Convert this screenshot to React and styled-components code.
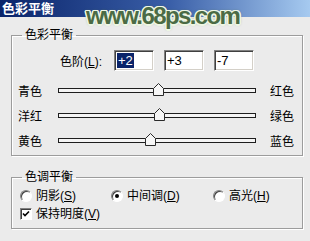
import React from "react";
import styled, { createGlobalStyle } from "styled-components";

const GlobalStyle = createGlobalStyle`
  html, body {
    margin: 0;
    padding: 0;
    background: #ebebeb;
  }
  body {
    font-family: "Liberation Sans", "Noto Sans CJK SC", sans-serif;
    font-size: 12px;
    color: #000;
    text-autospace: no-autospace;
  }
`;

const Dialog = styled.div`
  position: relative;
  width: 310px;
  height: 241px;
  background: #ebebeb;
  overflow: hidden;
`;

const TitleBar = styled.div`
  height: 17px;
  padding-left: 2px;
  display: flex;
  align-items: center;
  background: linear-gradient(to right, #0a246a 0%, #3a5fa8 55%, #a6caf0 100%);
  color: #fff;
  font-weight: bold;
  font-size: 13px;
  line-height: 17px;
`;

const Watermark = styled.div`
  position: absolute;
  left: 86px;
  top: 2px;
  font-family: "Liberation Sans", Arial, sans-serif;
  font-weight: bold;
  font-size: 24px;
  letter-spacing: -1.6px;
  color: #4b6b45;
  text-shadow:
    1.5px 0 0 #eef6e4, -1.5px 0 0 #eef6e4, 0 1.5px 0 #eef6e4, 0 -1.5px 0 #eef6e4,
    1px 1px 0 #eef6e4, -1px -1px 0 #eef6e4, 1px -1px 0 #eef6e4, -1px 1px 0 #eef6e4,
    0 0 3px #556f4c;
  pointer-events: none;
`;

const Group = styled.fieldset`
  margin: ${(p) => p.$top}px 7px 0 11px;
  padding: ${(p) => p.$padTop}px 0 0 0;
  min-width: 0;
  height: ${(p) => p.$height}px;
  box-sizing: border-box;
  border: 1px solid #9c9c9c;
  box-shadow: 1px 1px 0 #fff, inset 1px 1px 0 #fff;
`;

const Legend = styled.legend`
  margin-left: 10px;
  padding: 0 3px;
  line-height: 14px;
  font-size: 12px;
`;

const LevelsRow = styled.div`
  display: flex;
  align-items: center;
  gap: 10px;
  padding-left: 48px;
  height: 21px;
`;

const LevelsLabel = styled.span`
  margin-right: -2px;
  width: 46px;
`;

const NumBox = styled.div`
  width: 40px;
  height: 21px;
  box-sizing: border-box;
  background: #fff;
  border-top: 1px solid #808080;
  border-left: 1px solid #808080;
  border-bottom: 1px solid #fff;
  border-right: 1px solid #fff;
  box-shadow: inset 1px 1px 0 #404040, inset -1px -1px 0 #d4d0c8;
  padding: 2px 0 0 2px;
  font-family: "Liberation Sans", Arial, sans-serif;
  font-size: 13px;
  line-height: 15px;
`;

const Selected = styled.span`
  background: #0a246a;
  color: #fff;
  padding: 0 1px;
`;

const SliderRow = styled.div`
  display: grid;
  grid-template-columns: 40px 198px auto;
  align-items: center;
  height: 25px;
  padding-left: 6px;
`;

const SideLabel = styled.span`
  line-height: 14px;
  margin-left: ${(p) => p.$offset || 0}px;
`;

const TrackArea = styled.div`
  position: relative;
  height: 25px;
`;

const Track = styled.div`
  position: absolute;
  left: 0;
  right: 0;
  top: 9px;
  height: 5px;
  box-sizing: border-box;
  border: 1px solid #1e1e1e;
  background: #f4f4f4;
`;

const Thumb = styled.svg`
  position: absolute;
  top: 4px;
  width: 11px;
  height: 13px;
  overflow: visible;
`;

const Underline = styled.span`
  text-decoration: underline;
`;

const OptionRow = styled.div`
  display: grid;
  grid-template-columns: 91px 102px auto;
  align-items: center;
  height: 16px;
  padding-left: 8px;
  margin-top: ${(p) => p.$mt || 0}px;
`;

const Option = styled.label`
  display: flex;
  align-items: center;
  gap: 4px;
  line-height: 14px;
`;

const Radio = styled.span`
  position: relative;
  width: 12px;
  height: 12px;
  box-sizing: border-box;
  border-radius: 50%;
  border: 1px solid;
  border-color: #808080 #fff #fff #808080;
  background: #fff;
  box-shadow: inset 1px 1px 0 #404040;

  &::after {
    content: "";
    display: ${(p) => (p.$checked ? "block" : "none")};
    position: absolute;
    left: 3px;
    top: 3px;
    width: 4px;
    height: 4px;
    border-radius: 50%;
    background: #000;
  }
`;

const Check = styled.span`
  width: 12px;
  height: 12px;
  box-sizing: border-box;
  border: 1px solid;
  border-color: #808080 #fff #fff #808080;
  box-shadow: inset 1px 1px 0 #404040;
  background: #fff;
  display: flex;
  align-items: center;
  justify-content: center;
`;

const TRACK_W = 198;

function Slider({ left, right, value }) {
  const center = ((value + 100) / 200) * TRACK_W;
  return (
    <SliderRow>
      <SideLabel>{left}</SideLabel>
      <TrackArea>
        <Track />
        <Thumb style={{ left: center - 5.5 }} viewBox="0 0 11 13">
          <polygon points="0.5,5.5 5.5,0.5 10.5,5.5 10.5,12.5 0.5,12.5" fill="#f6f6f6" stroke="#2a2a2a" strokeWidth="1" />
        </Thumb>
      </TrackArea>
      <SideLabel $offset={14}>{right}</SideLabel>
    </SliderRow>
  );
}

export default function App() {
  return (
    <Dialog>
      <GlobalStyle />
      <TitleBar>色彩平衡</TitleBar>

      <Group $top={11} $padTop={8} $height={128}>
        <Legend>色彩平衡</Legend>
        <LevelsRow>
          <LevelsLabel>色阶(<Underline>L</Underline>):</LevelsLabel>
          <NumBox><Selected>+2</Selected></NumBox>
          <NumBox>+3</NumBox>
          <NumBox>-7</NumBox>
        </LevelsRow>
        <div style={{ height: 8 }} />
        <Slider left="青色" right="红色" value={2} />
        <Slider left="洋红" right="绿色" value={3} />
        <Slider left="黄色" right="蓝色" value={-7} />
      </Group>

      <Group $top={14} $padTop={4} $height={59}>
        <Legend>色调平衡</Legend>
        <OptionRow>
          <Option><Radio /><span>阴影(<Underline>S</Underline>)</span></Option>
          <Option><Radio $checked /><span>中间调(<Underline>D</Underline>)</span></Option>
          <Option><Radio /><span>高光(<Underline>H</Underline>)</span></Option>
        </OptionRow>
        <OptionRow $mt={2}>
          <Option>
            <Check>
              <svg width="8" height="8" viewBox="0 0 8 8">
                <path d="M1 3.5 L3 5.5 L7 1.5" fill="none" stroke="#000" strokeWidth="1.6" />
              </svg>
            </Check>
            <span>保持明度(<Underline>V</Underline>)</span>
          </Option>
        </OptionRow>
      </Group>

      <Watermark>www.68ps.com</Watermark>
    </Dialog>
  );
}
